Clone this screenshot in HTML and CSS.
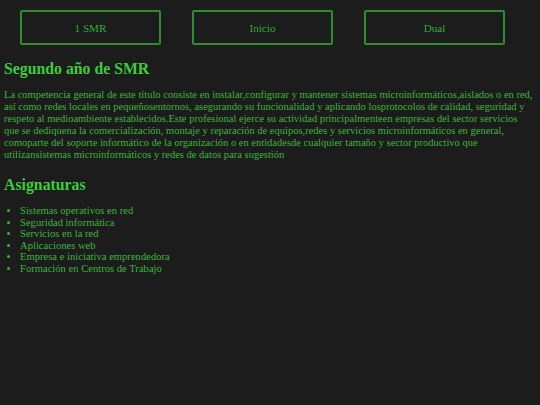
FILE: index.html
```html
<!DOCTYPE html>
<html lang="es">
<head>
<meta charset="utf-8">
<title>Segundo año de SMR</title>
<link rel="stylesheet" href="styles.css">
</head>
<body>
<nav class="nav">
  <a class="btn" href="#">1 SMR</a>
  <a class="btn" href="#">Inicio</a>
  <a class="btn" href="#">Dual</a>
</nav>
<main class="content">
  <h2 class="title">Segundo año de SMR</h2>
  <p class="text">La competencia general de este título consiste en instalar,configurar y mantener sistemas microinformáticos,aislados o en red, así como redes locales en pequeñosentornos, asegurando su funcionalidad y aplicando losprotocolos de calidad, seguridad y respeto al medioambiente establecidos.Este profesional ejerce su actividad principalmenteen empresas del sector servicios que se dediquena la comercialización, montaje y reparación de equipos,redes y servicios microinformáticos en general, comoparte del soporte informático de la organización o en entidadesde cualquier tamaño y sector productivo que utilizansistemas microinformáticos y redes de datos para sugestión</p>
  <h2 class="title title-sub">Asignaturas</h2>
  <ul class="list">
    <li>Sistemas operativos en red</li>
    <li>Seguridad informática</li>
    <li>Servicios en la red</li>
    <li>Aplicaciones web</li>
    <li>Empresa e iniciativa emprendedora</li>
    <li>Formación en Centros de Trabajo</li>
  </ul>
</main>
</body>
</html>
```
FILE: styles.css
```css
html, body {
  margin: 0;
  padding: 0;
  background: #1c1c1c;
}
body {
  font-family: "Liberation Serif", "Times New Roman", serif;
  color: #3cb43c;
}
.nav {
  display: flex;
  gap: 31px;
  padding: 10px 35px 0 20px;
}
.btn {
  box-sizing: border-box;
  width: 141px;
  height: 35px;
  display: flex;
  align-items: center;
  justify-content: center;
  border: 2px solid #2e8c2e;
  border-radius: 2px;
  color: #34a834;
  font-size: 11.2px;
  text-decoration: none;
}
.content {
  padding: 0 5px 0 4px;
}
.title {
  margin: 14px 0 0;
  font-size: 15.8px;
  line-height: 20px;
  font-weight: bold;
  color: #3ccc3c;
}
.text {
  margin: 10px 0 0;
  font-size: 10.5px;
  line-height: 12px;
}
.list {
  margin: 10px 0 0;
  padding-left: 16px;
  font-size: 10.6px;
  line-height: 11.6px;
}
```
